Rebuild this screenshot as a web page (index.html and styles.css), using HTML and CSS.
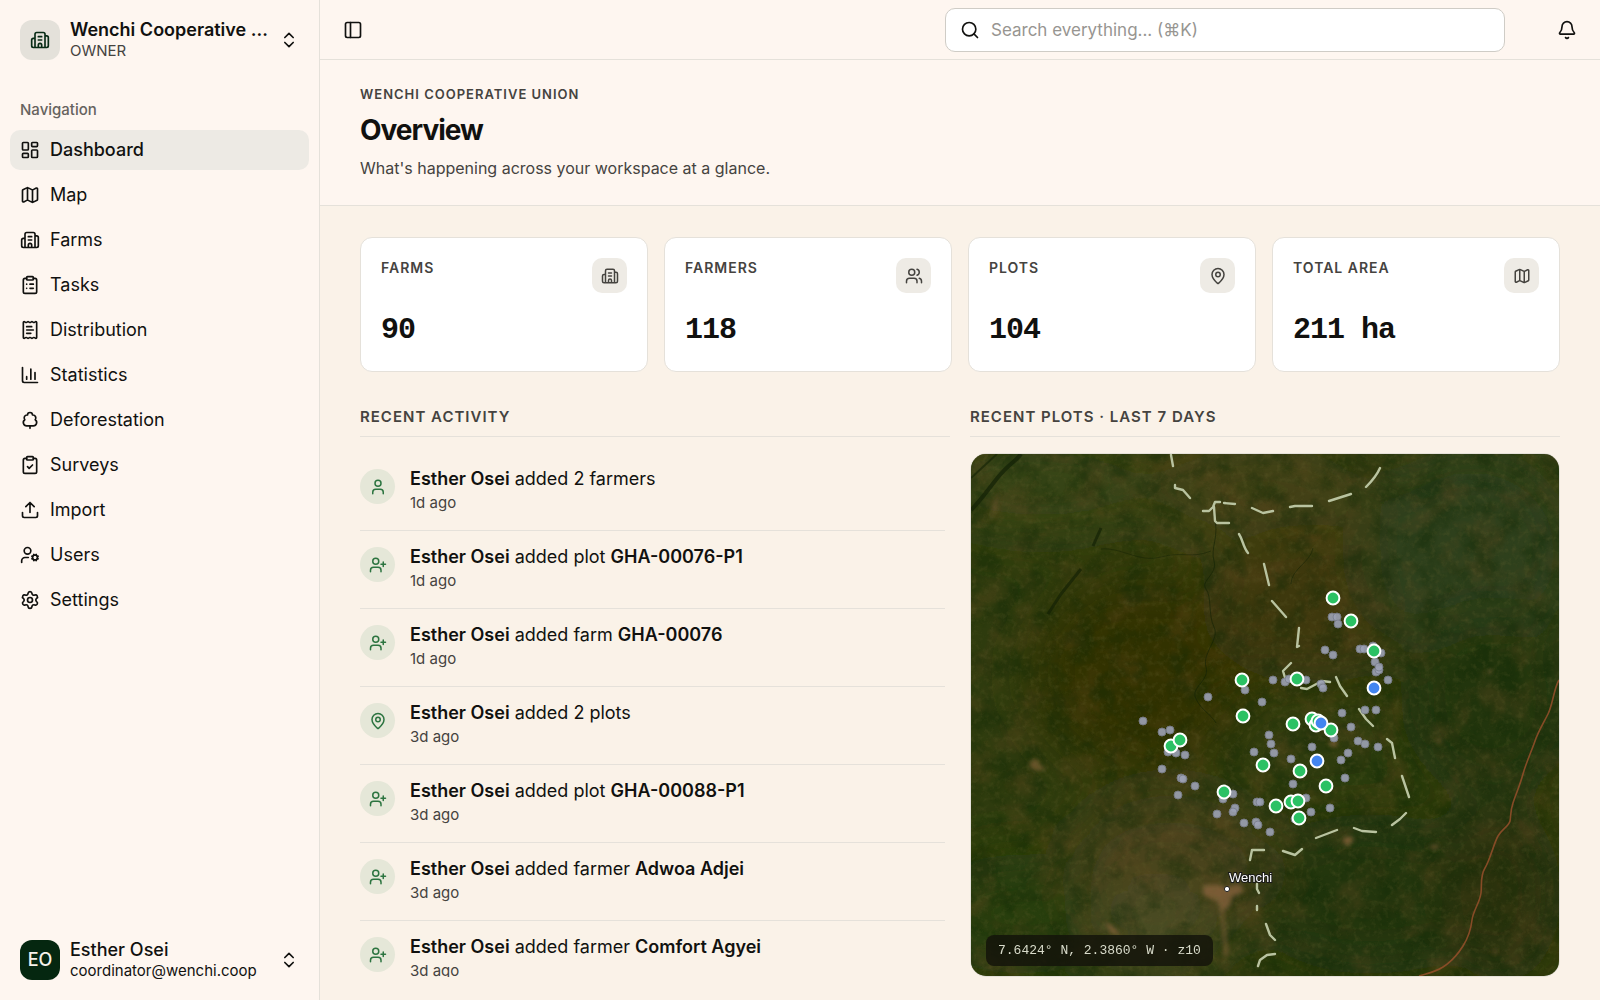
FILE: index.html
```html
<!DOCTYPE html>
<html lang="en">
<head>
<meta charset="utf-8">
<meta name="viewport" content="width=device-width, initial-scale=1">
<title>Overview</title>
<link rel="stylesheet" href="styles.css">
</head>
<body>
<svg class="sprite" aria-hidden="true">
  <symbol id="building" viewBox="0 0 24 24"><path d="M10 12h4M10 8h4M14 21v-3a2 2 0 0 0-4 0v3M6 10H4a2 2 0 0 0-2 2v7a2 2 0 0 0 2 2h16a2 2 0 0 0 2-2V9a2 2 0 0 0-2-2h-2M6 21V5a2 2 0 0 1 2-2h8a2 2 0 0 1 2 2v16"/></symbol>
  <symbol id="chevrons" viewBox="0 0 24 24"><path d="m7 15 5 5 5-5M7 9l5-5 5 5"/></symbol>
  <symbol id="dashboard" viewBox="0 0 24 24"><rect x="3" y="3" width="7" height="9" rx="1"/><rect x="14" y="3" width="7" height="5" rx="1"/><rect x="14" y="12" width="7" height="9" rx="1"/><rect x="3" y="16" width="7" height="5" rx="1"/></symbol>
  <symbol id="map" viewBox="0 0 24 24"><path d="M14.106 5.553a2 2 0 0 0 1.788 0l3.659-1.83A1 1 0 0 1 21 4.619v12.764a1 1 0 0 1-.553.894l-4.553 2.277a2 2 0 0 1-1.788 0l-4.212-2.106a2 2 0 0 0-1.788 0l-3.659 1.83A1 1 0 0 1 3 19.381V6.618a1 1 0 0 1 .553-.894l4.553-2.277a2 2 0 0 1 1.788 0zM15 5.764v15M9 3.236v15"/></symbol>
  <symbol id="tasks" viewBox="0 0 24 24"><rect x="8" y="2" width="8" height="4" rx="1"/><path d="M16 4h2a2 2 0 0 1 2 2v14a2 2 0 0 1-2 2H6a2 2 0 0 1-2-2V6a2 2 0 0 1 2-2h2M12 11h4M12 16h4M8 11h.01M8 16h.01"/></symbol>
  <symbol id="receipt" viewBox="0 0 24 24"><path d="M13 16H8M14 8H8M16 12H8M4 3a1 1 0 0 1 1-1 1.3 1.3 0 0 1 .7.2l.933.6a1.3 1.3 0 0 0 1.4 0l.934-.6a1.3 1.3 0 0 1 1.4 0l.933.6a1.3 1.3 0 0 0 1.4 0l.933-.6a1.3 1.3 0 0 1 1.4 0l.934.6a1.3 1.3 0 0 0 1.4 0l.933-.6A1.3 1.3 0 0 1 19 2a1 1 0 0 1 1 1v18a1 1 0 0 1-1 1 1.3 1.3 0 0 1-.7-.2l-.933-.6a1.3 1.3 0 0 0-1.4 0l-.934.6a1.3 1.3 0 0 1-1.4 0l-.933-.6a1.3 1.3 0 0 0-1.4 0l-.933.6a1.3 1.3 0 0 1-1.4 0l-.934-.6a1.3 1.3 0 0 0-1.4 0l-.933.6a1.3 1.3 0 0 1-.7.2 1 1 0 0 1-1-1z"/></symbol>
  <symbol id="chart" viewBox="0 0 24 24"><path d="M3 3v16a2 2 0 0 0 2 2h16M18 17V9M13 17V5M8 17v-3"/></symbol>
  <symbol id="tree" viewBox="0 0 24 24"><path d="M8 19a4 4 0 0 1-2.24-7.32A3.5 3.5 0 0 1 9 6.03V6a3 3 0 1 1 6 0v.04a3.5 3.5 0 0 1 3.24 5.65A4 4 0 0 1 16 19ZM12 19v3"/></symbol>
  <symbol id="survey" viewBox="0 0 24 24"><rect x="8" y="2" width="8" height="4" rx="1"/><path d="M16 4h2a2 2 0 0 1 2 2v14a2 2 0 0 1-2 2H6a2 2 0 0 1-2-2V6a2 2 0 0 1 2-2h2M9 14l2 2 4-4"/></symbol>
  <symbol id="upload" viewBox="0 0 24 24"><path d="M12 3v12M17 8l-5-5-5 5M21 15v4a2 2 0 0 1-2 2H5a2 2 0 0 1-2-2v-4"/></symbol>
  <symbol id="user-cog" viewBox="0 0 24 24"><path d="M10 15H6a4 4 0 0 0-4 4v2M14.305 16.53l.923-.382M15.228 13.852l-.923-.383M16.852 12.228l-.383-.923M16.852 17.772l-.383.924M19.148 12.228l.383-.923M19.53 18.696l-.382-.924M20.772 13.852l.924-.383M20.772 16.148l.924.383"/><circle cx="18" cy="15" r="3"/><circle cx="9" cy="7" r="4"/></symbol>
  <symbol id="settings" viewBox="0 0 24 24"><path d="M9.671 4.136a2.34 2.34 0 0 1 4.659 0 2.34 2.34 0 0 0 3.319 1.915 2.34 2.34 0 0 1 2.33 4.033 2.34 2.34 0 0 0 0 3.831 2.34 2.34 0 0 1-2.33 4.033 2.34 2.34 0 0 0-3.319 1.915 2.34 2.34 0 0 1-4.659 0 2.34 2.34 0 0 0-3.32-1.915 2.34 2.34 0 0 1-2.33-4.033 2.34 2.34 0 0 0 0-3.831A2.34 2.34 0 0 1 6.35 6.051a2.34 2.34 0 0 0 3.319-1.915"/><circle cx="12" cy="12" r="3"/></symbol>
  <symbol id="panel" viewBox="0 0 24 24"><rect x="3" y="3" width="18" height="18" rx="2"/><path d="M9 3v18"/></symbol>
  <symbol id="search" viewBox="0 0 24 24"><circle cx="11" cy="11" r="8"/><path d="m21 21-4.3-4.3"/></symbol>
  <symbol id="bell" viewBox="0 0 24 24"><path d="M10.268 21a2 2 0 0 0 3.464 0M3.262 15.326A1 1 0 0 0 4 17h16a1 1 0 0 0 .74-1.673C19.41 13.956 18 12.499 18 8A6 6 0 0 0 6 8c0 4.499-1.411 5.956-2.738 7.326"/></symbol>
  <symbol id="users" viewBox="0 0 24 24"><path d="M16 21v-2a4 4 0 0 0-4-4H6a4 4 0 0 0-4 4v2M16 3.128a4 4 0 0 1 0 7.744M22 21v-2a4 4 0 0 0-3-3.87"/><circle cx="9" cy="7" r="4"/></symbol>
  <symbol id="pin" viewBox="0 0 24 24"><path d="M20 10c0 4.993-5.539 10.193-7.399 11.799a1 1 0 0 1-1.202 0C9.539 20.193 4 14.993 4 10a8 8 0 0 1 16 0"/><circle cx="12" cy="10" r="3"/></symbol>
  <symbol id="user" viewBox="0 0 24 24"><path d="M19 21v-2a4 4 0 0 0-4-4H9a4 4 0 0 0-4 4v2"/><circle cx="12" cy="7" r="4"/></symbol>
  <symbol id="user-plus" viewBox="0 0 24 24"><path d="M16 21v-2a4 4 0 0 0-4-4H6a4 4 0 0 0-4 4v2M19 8v6M22 11h-6"/><circle cx="9" cy="7" r="4"/></symbol>
</svg>

<div class="app">
  <aside class="sidebar">
    <button class="account" type="button">
      <span class="avatar avatar-org"><svg class="icon"><use href="#building"/></svg></span>
      <span class="account-text"><span class="account-name strong">Wenchi Cooperative Union</span><span class="account-sub muted">OWNER</span></span>
      <svg class="icon"><use href="#chevrons"/></svg>
    </button>
    <nav class="nav" aria-labelledby="nav-label">
      <h2 class="nav-label" id="nav-label">Navigation</h2>
      <a class="nav-item active" href="#" aria-current="page"><svg class="icon"><use href="#dashboard"/></svg>Dashboard</a>
      <a class="nav-item" href="#"><svg class="icon"><use href="#map"/></svg>Map</a>
      <a class="nav-item" href="#"><svg class="icon"><use href="#building"/></svg>Farms</a>
      <a class="nav-item" href="#"><svg class="icon"><use href="#tasks"/></svg>Tasks</a>
      <a class="nav-item" href="#"><svg class="icon"><use href="#receipt"/></svg>Distribution</a>
      <a class="nav-item" href="#"><svg class="icon"><use href="#chart"/></svg>Statistics</a>
      <a class="nav-item" href="#"><svg class="icon"><use href="#tree"/></svg>Deforestation</a>
      <a class="nav-item" href="#"><svg class="icon"><use href="#survey"/></svg>Surveys</a>
      <a class="nav-item" href="#"><svg class="icon"><use href="#upload"/></svg>Import</a>
      <a class="nav-item" href="#"><svg class="icon"><use href="#user-cog"/></svg>Users</a>
      <a class="nav-item" href="#"><svg class="icon"><use href="#settings"/></svg>Settings</a>
    </nav>
    <button class="account" type="button">
      <span class="avatar avatar-user">EO</span>
      <span class="account-text"><span class="account-name">Esther Osei</span><span class="account-sub">coordinator@wenchi.coop</span></span>
      <svg class="icon"><use href="#chevrons"/></svg>
    </button>
  </aside>

  <div class="page">
    <header class="topbar">
      <button class="icon-button" type="button" aria-label="Toggle sidebar"><svg class="icon"><use href="#panel"/></svg></button>
      <label class="search"><svg class="icon"><use href="#search"/></svg><input type="text" placeholder="Search everything... (⌘K)" aria-label="Search everything"></label>
      <button class="icon-button" type="button" aria-label="Notifications"><svg class="icon"><use href="#bell"/></svg></button>
    </header>

    <section class="intro">
      <p class="eyebrow compact">WENCHI COOPERATIVE UNION</p>
      <h1 class="title">Overview</h1>
      <p class="lead">What's happening across your workspace at a glance.</p>
    </section>

    <main class="content">
      <section class="stats" aria-label="Totals">
        <article class="card"><div class="card-head"><h2 class="eyebrow">FARMS</h2><span class="chip"><svg class="icon small"><use href="#building"/></svg></span></div><p class="value">90</p></article>
        <article class="card"><div class="card-head"><h2 class="eyebrow">FARMERS</h2><span class="chip"><svg class="icon small"><use href="#users"/></svg></span></div><p class="value">118</p></article>
        <article class="card"><div class="card-head"><h2 class="eyebrow">PLOTS</h2><span class="chip"><svg class="icon small"><use href="#pin"/></svg></span></div><p class="value">104</p></article>
        <article class="card"><div class="card-head"><h2 class="eyebrow">TOTAL AREA</h2><span class="chip"><svg class="icon small"><use href="#map"/></svg></span></div><p class="value">211 ha</p></article>
      </section>

      <div class="columns">
        <section class="panel">
          <h2 class="panel-title">RECENT ACTIVITY</h2>
          <ul class="feed">
            <li class="event"><span class="dot"><svg class="icon small"><use href="#user"/></svg></span><div><p class="event-text"><strong>Esther Osei</strong> added 2 farmers</p><p class="event-time">1d ago</p></div></li>
            <li class="event"><span class="dot"><svg class="icon small"><use href="#user-plus"/></svg></span><div><p class="event-text"><strong>Esther Osei</strong> added plot <strong>GHA-00076-P1</strong></p><p class="event-time">1d ago</p></div></li>
            <li class="event"><span class="dot"><svg class="icon small"><use href="#user-plus"/></svg></span><div><p class="event-text"><strong>Esther Osei</strong> added farm <strong>GHA-00076</strong></p><p class="event-time">1d ago</p></div></li>
            <li class="event"><span class="dot"><svg class="icon small"><use href="#pin"/></svg></span><div><p class="event-text"><strong>Esther Osei</strong> added 2 plots</p><p class="event-time">3d ago</p></div></li>
            <li class="event"><span class="dot"><svg class="icon small"><use href="#user-plus"/></svg></span><div><p class="event-text"><strong>Esther Osei</strong> added plot <strong>GHA-00088-P1</strong></p><p class="event-time">3d ago</p></div></li>
            <li class="event"><span class="dot"><svg class="icon small"><use href="#user-plus"/></svg></span><div><p class="event-text"><strong>Esther Osei</strong> added farmer <strong>Adwoa Adjei</strong></p><p class="event-time">3d ago</p></div></li>
            <li class="event"><span class="dot"><svg class="icon small"><use href="#user-plus"/></svg></span><div><p class="event-text"><strong>Esther Osei</strong> added farmer <strong>Comfort Agyei</strong></p><p class="event-time">3d ago</p></div></li>
          </ul>
        </section>

        <section class="panel">
          <h2 class="panel-title">RECENT PLOTS · LAST 7 DAYS</h2>
          <div class="map">
            <svg class="map-canvas" viewBox="0 0 588 522" preserveAspectRatio="xMidYMid slice" role="img" aria-label="Satellite map of plots around Wenchi">
              <defs>
                <filter id="soft" x="-50%" y="-50%" width="200%" height="200%"><feGaussianBlur stdDeviation="28"/></filter>
                <filter id="haze" x="-50%" y="-50%" width="200%" height="200%"><feGaussianBlur stdDeviation="2"/></filter>
                <filter id="patches" x="0" y="0" width="100%" height="100%" color-interpolation-filters="sRGB">
                  <feTurbulence type="fractalNoise" baseFrequency="0.03" numOctaves="6" seed="11"/>
                  <feColorMatrix values="0 0 0 0 .40  0 0 0 0 .29  0 0 0 0 .13  3 0 0 0 -1.4"/>
                </filter>
                <filter id="canopy" x="0" y="0" width="100%" height="100%" color-interpolation-filters="sRGB">
                  <feTurbulence type="fractalNoise" baseFrequency="0.04" numOctaves="6" seed="4"/>
                  <feColorMatrix values="0 0 0 0 .06  0 0 0 0 .16  0 0 0 0 .02  0 3 0 0 -1.3"/>
                </filter>
                <filter id="grain" x="0" y="0" width="100%" height="100%" color-interpolation-filters="sRGB">
                  <feTurbulence type="fractalNoise" baseFrequency="0.17" numOctaves="4" seed="8"/>
                  <feColorMatrix values="0 0 0 0 .42  0 0 0 0 .40  0 0 0 0 .2  0 0 2 0 -.95"/>
                </filter>
              </defs>
              <rect width="588" height="522" fill="#2f3c0e"/>
              <g filter="url(#soft)">
                <ellipse cx="70" cy="30" rx="120" ry="50" fill="#374518"/>
                <ellipse cx="290" cy="35" rx="120" ry="60" fill="#434319"/>
                <ellipse cx="170" cy="220" rx="110" ry="100" fill="#323306"/>
                <ellipse cx="340" cy="150" rx="110" ry="80" fill="#3e390f"/>
                <ellipse cx="500" cy="100" rx="110" ry="110" fill="#2f401a"/>
                <ellipse cx="520" cy="250" rx="90" ry="90" fill="#20350b"/>
                <ellipse cx="400" cy="440" rx="130" ry="80" fill="#22360b"/>
                <ellipse cx="530" cy="440" rx="60" ry="90" fill="#2c300b"/>
                <ellipse cx="50" cy="460" rx="100" ry="60" fill="#253e0e"/>
                <ellipse cx="200" cy="410" rx="100" ry="70" fill="#49431d"/>
                <ellipse cx="185" cy="475" rx="60" ry="40" fill="#4c4d26"/>
              </g>
              <rect width="588" height="522" filter="url(#patches)" opacity=".3"/>
              <rect width="588" height="522" filter="url(#canopy)" opacity=".4"/>
              <g filter="url(#haze)" fill="#8a643c">
                <path d="M232 431h18l4 3 14-4 6 8-12 4-4 12-8 2-4-9-14-6z" opacity=".75"/>
                <path d="M58 308l8-4 3 7 7 4-9 2-8-3z" opacity=".65"/>
                <path d="M133 469l8 2 9 11-9-2z" opacity=".8"/>
                <path d="M371 386l6-4 7 3-5 4-2 4z" opacity=".8"/>
                <path d="M457 393l8-3 4 2-5 4z" opacity=".6"/>
                <path d="M357 289l5-3 6 3-5 5z" opacity=".7"/>
                <path d="M252 450l6 50-5 4-4-50z" opacity=".5"/>
                <path d="M28 36l-6 18-2 14 6-15z" opacity=".5"/>
                <path d="M516 217l5-2-2 6zM466 286l3-2-1 7zM522 497l4-3-3 7z" opacity=".8"/>
              </g>
              <rect width="588" height="522" filter="url(#grain)" opacity=".3"/>
              <g fill="none" stroke="#132105">
                <path d="M0 56C12 44 18 34 28 22S44 8 50 0" stroke-width="4" opacity=".7"/>
                <path d="M0 24 26 0" stroke-width="2" opacity=".6"/>
                <path d="M77 160 90 140 110 115M122 92l8-18" stroke-width="3" opacity=".65"/>
                <path d="M243 62c6 20-4 32 0 45s-14 20-8 28 2 26 8 38-12 26-8 40-16 20-10 32 14 14 20 24" stroke-width="1" opacity=".6"/>
                <path d="M130 95c20-2 38 14 60 8s30 2 50-6" stroke-width="1" opacity=".45"/>
                <path d="M320 130c0-15 20-22 22-36" stroke-width="1" opacity=".5"/>
              </g>
              <path d="M588 226c-5 8-6 24-11 34s-10 18-13 27-9 22-12 33-7 20-10 29-2 13-3 18-8 8-12 15-8 24-13 32-3 16-4 25-8 18-9 27-4 18-9 26-12 16-20 21-10 5-24 9" fill="none" stroke="#96502b" stroke-width="1.6" opacity=".85"/>
              <!-- district boundary -->
              <g fill="none" stroke="#b9c3a0" stroke-width="2.4" stroke-linecap="round" stroke-linejoin="round">
                <path d="M200 1l2 11M204 31v3l8 2 7 8M232 57h6l4-4 2-5h5M253 49l11 1M281 54l11 5 10-2M319 53l5-1h17M358 47l22-7M395 33c6-6 11-12 14-19M243 53l1 14 2 2h12M268 80c4 6 4 13 9 19M293 110l5 21M301 147l14 16"/>
                <path d="M328 174l-2 19 2-1M320 209l-8 8 3 10M330 234l6 1 15-8 8 1M365 223l4 9 7 10M388 255l7 10 7 7M416 285l5 4 3 15M431 322l7 21M435 359l-6 6-8 6M405 378l-14-1-8-3M366 376l-21 8M331 395l-7 6-12-4M293 396h-12l-2 10M286 430v5l2 4M286 452v4M295 470l4 11 5 5M304 500l-8 1-7 5-2 6"/>
              </g>
              <!-- existing plots -->
              <g class="plots">
                <circle cx="361" cy="163" r="4"/><circle cx="366" cy="163" r="4"/><circle cx="367" cy="170" r="4"/><circle cx="354" cy="196" r="4"/><circle cx="362" cy="201" r="4"/>
                <circle cx="389" cy="195" r="4"/><circle cx="393" cy="195" r="4"/><circle cx="402" cy="192" r="4"/><circle cx="410" cy="199" r="4"/><circle cx="404" cy="208" r="4"/><circle cx="405" cy="218" r="4"/><circle cx="408" cy="216" r="4"/><circle cx="408" cy="213" r="4"/><circle cx="417" cy="226" r="4"/>
                <circle cx="394" cy="256" r="4"/><circle cx="405" cy="256" r="4"/><circle cx="371" cy="259" r="4"/><circle cx="380" cy="273" r="4"/><circle cx="387" cy="287" r="4"/><circle cx="394" cy="290" r="4"/><circle cx="407" cy="293" r="4"/><circle cx="377" cy="299" r="4"/><circle cx="370" cy="306" r="4"/><circle cx="374" cy="324" r="4"/><circle cx="363" cy="284" r="4"/>
                <circle cx="341" cy="293" r="4"/><circle cx="320" cy="305" r="4"/><circle cx="322" cy="330" r="4"/><circle cx="298" cy="281" r="4"/><circle cx="300" cy="290" r="4"/><circle cx="303" cy="299" r="4"/><circle cx="283" cy="298" r="4"/><circle cx="291" cy="248" r="4"/>
                <circle cx="302" cy="226" r="4"/><circle cx="314" cy="228" r="4"/><circle cx="318" cy="225" r="4"/><circle cx="335" cy="226" r="4"/><circle cx="350" cy="230" r="4"/><circle cx="352" cy="234" r="4"/><circle cx="274" cy="236" r="4"/><circle cx="237" cy="243" r="4"/>
                <circle cx="172" cy="267" r="4"/><circle cx="191" cy="278" r="4"/><circle cx="199" cy="276" r="4"/><circle cx="197" cy="298" r="4"/><circle cx="205" cy="299" r="4"/><circle cx="214" cy="301" r="4"/><circle cx="191" cy="315" r="4"/><circle cx="210" cy="324" r="4"/><circle cx="212" cy="325" r="4"/><circle cx="224" cy="332" r="4"/><circle cx="207" cy="341" r="4"/>
                <circle cx="262" cy="340" r="4"/><circle cx="252" cy="345" r="4"/><circle cx="264" cy="354" r="4"/><circle cx="262" cy="358" r="4"/><circle cx="246" cy="360" r="4"/><circle cx="286" cy="348" r="4"/><circle cx="289" cy="348" r="4"/><circle cx="273" cy="369" r="4"/><circle cx="285" cy="368" r="4"/><circle cx="287" cy="371" r="4"/><circle cx="299" cy="378" r="4"/>
                <circle cx="335" cy="344" r="4"/><circle cx="340" cy="358" r="4"/><circle cx="359" cy="354" r="4"/><circle cx="324" cy="365" r="4"/>
              </g>
              <!-- plots added in the last week -->
              <g class="recent">
                <circle cx="362" cy="144" r="6.4"/><circle cx="380" cy="167" r="6.4"/><circle cx="403" cy="197" r="6.4"/><circle cx="326" cy="225" r="6.4"/><circle cx="271" cy="226" r="6.4"/><circle cx="272" cy="262" r="6.4"/><circle cx="322" cy="270" r="6.4"/><circle cx="341" cy="265" r="6.4"/><circle cx="345" cy="271" r="6.4"/><circle cx="347" cy="267" r="6.4"/><circle cx="360" cy="276" r="6.4"/><circle cx="200" cy="292" r="6.4"/><circle cx="209" cy="286" r="6.4"/><circle cx="292" cy="311" r="6.4"/><circle cx="329" cy="317" r="6.4"/><circle cx="355" cy="332" r="6.4"/><circle cx="253" cy="338" r="6.4"/><circle cx="305" cy="352" r="6.4"/><circle cx="320" cy="348" r="6.4"/><circle cx="327" cy="347" r="6.4"/><circle cx="328" cy="364" r="6.4"/>
                <circle class="blue" cx="403" cy="234" r="6.4"/><circle class="blue" cx="350" cy="269" r="6.4"/><circle class="blue" cx="346" cy="307" r="6.4"/>
              </g>
              <circle cx="256" cy="435" r="2.6" fill="#fff" stroke="#222" stroke-width="1"/>
              <text class="place" x="258" y="428">Wenchi</text>
            </svg>
            <p class="coords">7.6424° N, 2.3860° W · z10</p>
          </div>
        </section>
      </div>
    </main>
  </div>
</div>
</body>
</html>
```
FILE: styles.css
```css
:root {
  --surface: #fef6f0;
  --canvas: #faf2e8;
  --line: #e5e1da;
  --ink: #11110f;
  --muted: #45433f;
  --chip: #eeebe5;
  --mono: "Liberation Mono", monospace;
}

*, *::before, *::after { box-sizing: border-box; }

body {
  margin: 0;
  background: var(--canvas);
  color: var(--ink);
  font-family: Inter, "Liberation Sans", sans-serif;
  font-size: 18px;
  line-height: 24px;
}

h1, h2, p, ul { margin: 0; padding: 0; }
button { border: 0; background: none; color: inherit; font: inherit; padding: 0; cursor: pointer; }
.sprite { display: none; }

.icon {
  width: 20px;
  height: 20px;
  flex: none;
  fill: none;
  stroke: currentColor;
  stroke-width: 2;
  stroke-linecap: round;
  stroke-linejoin: round;
}
.icon.small { width: 18px; height: 18px; }

.app {
  display: grid;
  grid-template-columns: 320px minmax(0, 1fr);
  height: 100vh;
}

/* Sidebar */
.sidebar {
  display: flex;
  flex-direction: column;
  padding: 10px;
  background: var(--surface);
  border-right: 1px solid var(--line);
}
.account {
  display: flex;
  align-items: center;
  gap: 10px;
  height: 60px;
  padding: 0 10px;
  text-align: left;
}
.account-text { display: flex; flex: 1; flex-direction: column; min-width: 0; }
.account-name { overflow: hidden; line-height: 22px; font-weight: 500; text-overflow: ellipsis; white-space: nowrap; }
.account-name.strong { font-weight: 600; }
.account-sub { font-size: 15px; line-height: 20px; }
.account-sub.muted { color: var(--muted); }
.avatar {
  display: grid;
  place-items: center;
  flex: none;
  width: 40px;
  height: 40px;
  border-radius: 12px;
  font-weight: 600;
}
.avatar-org { background: #e4e1da; color: #082c16; }
.avatar-user { background: #052710; color: #f6f2ea; font-weight: 500; }
.nav { display: flex; flex: 1; flex-direction: column; gap: 5px; padding-top: 20px; }
.nav-label { height: 35px; padding: 0 10px; color: #66635e; font-size: 15px; font-weight: 500; line-height: 40px; }
.nav-item {
  display: flex;
  align-items: center;
  gap: 10px;
  height: 40px;
  padding: 0 10px;
  border-radius: 10px;
  color: inherit;
  text-decoration: none;
}
.nav-item.active { background: #edeae4; font-weight: 500; }

/* Top bar and page heading */
.page { display: flex; flex-direction: column; min-width: 0; min-height: 0; }
.topbar {
  display: flex;
  align-items: center;
  flex: none;
  height: 60px;
  padding: 0 14px;
  background: var(--surface);
  border-bottom: 1px solid var(--line);
}
.icon-button { display: grid; place-items: center; width: 38px; height: 38px; }
.search {
  display: flex;
  align-items: center;
  gap: 11px;
  width: 560px;
  height: 44px;
  margin: 0 43px 0 auto;
  padding: 0 14px;
  background: #fff;
  border: 1px solid #cfccc6;
  border-radius: 10px;
}
.search input { flex: 1; min-width: 0; padding: 0; border: 0; outline: 0; background: none; color: var(--ink); font: inherit; font-size: 17px; }
.search input::placeholder { color: #979591; opacity: 1; }
.intro {
  flex: none;
  padding: 24px 40px 26px;
  background: var(--surface);
  border-bottom: 1px solid var(--line);
}
.eyebrow { color: var(--muted); font-size: 14px; font-weight: 600; line-height: 20px; letter-spacing: 1px; }
.eyebrow.compact { font-size: 13px; }
.title { margin: 8px 0 9px; font-size: 28px; font-weight: 700; line-height: 36px; letter-spacing: -1px; }
.lead { color: var(--muted); font-size: 16px; line-height: 22px; }

/* Dashboard content */
.content { display: flex; flex: 1; flex-direction: column; gap: 34px; min-height: 0; padding: 31px 40px 23px; }
.stats { display: grid; flex: none; grid-template-columns: repeat(4, minmax(0, 1fr)); gap: 16px; }
.card { padding: 20px; background: #fff; border: 1px solid var(--line); border-radius: 12px; }
.card-head { display: flex; align-items: flex-start; justify-content: space-between; }
.chip { display: grid; place-items: center; width: 35px; height: 35px; border-radius: 10px; background: var(--chip); color: var(--muted); }
.value { margin-top: 16px; font: 700 30px/42px var(--mono); letter-spacing: -1px; }

.columns { display: grid; flex: 1; grid-template-columns: repeat(2, minmax(0, 1fr)); gap: 20px; min-height: 0; }
.panel { display: flex; flex-direction: column; gap: 16px; min-height: 0; }
.panel-title {
  padding-bottom: 8px;
  border-bottom: 1px solid var(--line);
  color: var(--muted);
  font-size: 15px;
  font-weight: 600;
  line-height: 22px;
  letter-spacing: 1px;
}
.feed { flex: 1; min-height: 0; padding-right: 5px; overflow-y: auto; list-style: none; scrollbar-width: none; }
.event { display: flex; gap: 15px; height: 78px; padding-top: 13px; border-bottom: 1px solid var(--line); }
.event:last-child { height: auto; border-bottom: 0; }
.dot { display: grid; place-items: center; flex: none; width: 35px; height: 35px; margin-top: 3px; border-radius: 50%; background: #e5e7d8; color: #2c7440; }
.event-text { line-height: 26px; }
.event-text strong { font-weight: 600; }
.event-time { color: var(--muted); font-size: 15px; line-height: 22px; }

/* Map */
.map { position: relative; flex: 1; min-height: 0; overflow: hidden; border: 1px solid var(--line); border-radius: 16px; }
.map-canvas { display: block; width: 100%; height: 100%; }
.plots circle { fill: #9da2b5; stroke: #7d8290; stroke-width: 1; opacity: .9; }
.recent circle { fill: #2bc164; stroke: #fff; stroke-width: 2; }
.recent .blue { fill: #4285f0; }
.place { fill: #fff; stroke: #1a1a1a; stroke-width: 2px; paint-order: stroke; font-family: "Liberation Sans", sans-serif; font-size: 13px; }
.coords {
  position: absolute;
  bottom: 10px;
  left: 15px;
  padding: 5px 12px;
  border-radius: 8px;
  background: rgb(20 20 10 / 85%);
  color: #d9dccb;
  font: 13px/21px var(--mono);
}
```
